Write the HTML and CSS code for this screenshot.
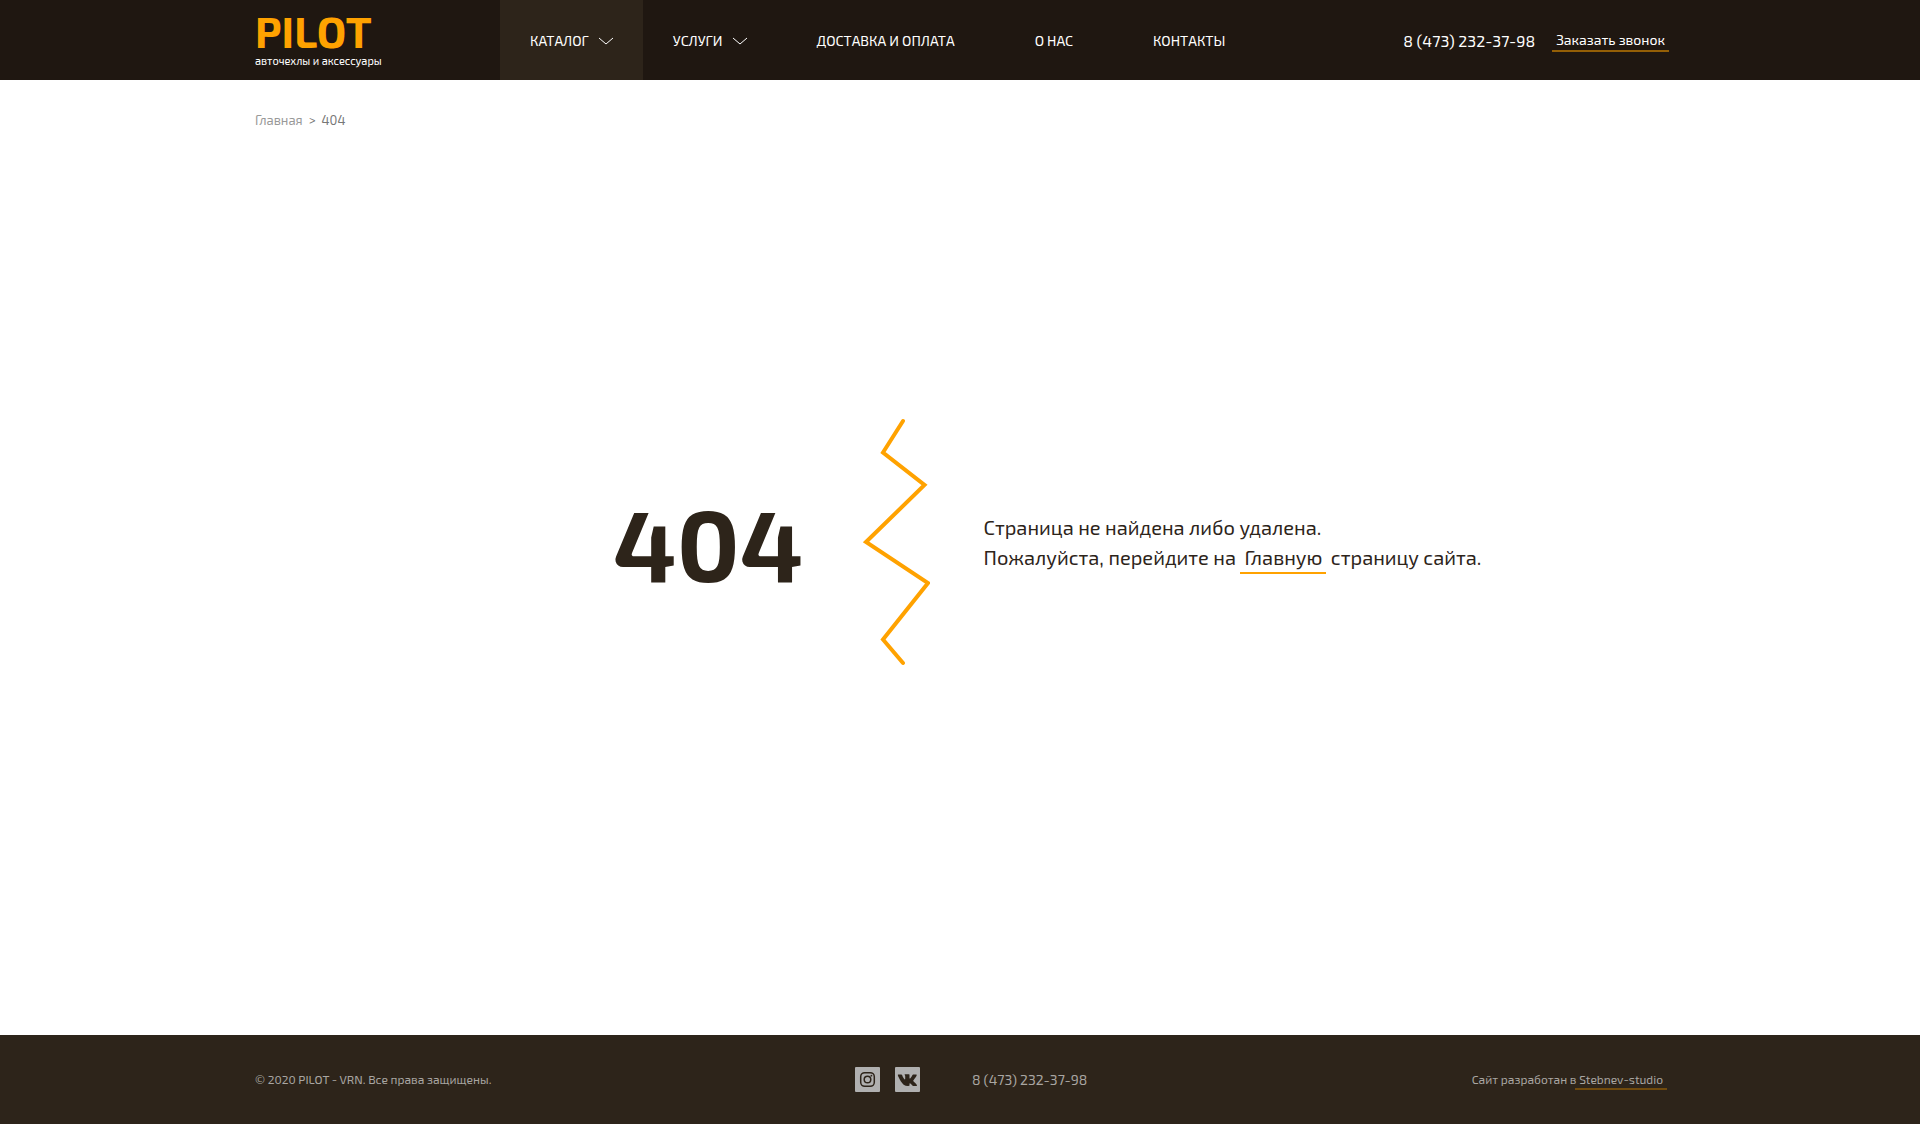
FILE: index.html
```html
<!DOCTYPE html>
<html lang="ru">
<head>
  <meta charset="utf-8">
  <meta name="viewport" content="width=device-width, initial-scale=1">
  <title>404 — PILOT</title>
  <link rel="stylesheet" href="styles.css">
</head>
<body>
  <header class="header">
    <div class="container header__inner">
      <a class="logo" href="#">
        <span class="logo__name">PILOT</span>
        <span class="logo__tagline">авточехлы и аксессуары</span>
      </a>
      <nav class="nav">
        <a class="nav__link nav__link--menu nav__link--active" href="#">КАТАЛОГ
          <svg class="nav__arrow" viewBox="0 0 16 8" aria-hidden="true"><path d="M1 1l7 6 7-6"/></svg>
        </a>
        <a class="nav__link nav__link--menu" href="#">УСЛУГИ
          <svg class="nav__arrow" viewBox="0 0 16 8" aria-hidden="true"><path d="M1 1l7 6 7-6"/></svg>
        </a>
        <a class="nav__link" href="#">ДОСТАВКА И ОПЛАТА</a>
        <a class="nav__link" href="#">О НАС</a>
        <a class="nav__link" href="#">КОНТАКТЫ</a>
      </nav>
      <div class="contacts">
        <a class="contacts__phone" href="tel:84732323798">8 (473) 232-37-98</a>
        <button class="contacts__call" type="button">Заказать звонок</button>
      </div>
    </div>
  </header>

  <main class="container main">
    <nav class="breadcrumbs">
      <a class="breadcrumbs__link" href="#">Главная</a>
      <span>&gt;</span>
      <span>404</span>
    </nav>
    <section class="error">
      <h1 class="error__code">404</h1>
      <svg class="error__crack" viewBox="0 0 68 248" aria-hidden="true"><path d="M41 3L21 34.500L62.500 67L4 124L66 165L21 221.500L41 245"/></svg>
      <p class="error__text">Страница не найдена либо удалена.<br>Пожалуйста, перейдите на <a class="error__link" href="#">Главную</a> страницу сайта.</p>
    </section>
  </main>

  <footer class="footer">
    <div class="container footer__inner">
      <p class="footer__copy">© 2020 PILOT - VRN. Все права защищены.</p>
      <div class="footer__contacts">
        <a class="social" href="#" aria-label="Instagram">
          <svg viewBox="0 0 25 25"><rect class="social__bg" width="25" height="25" rx="1"/><g class="social__line"><rect x="5.700" y="5.700" width="13.600" height="13.600" rx="4"/><circle cx="12.500" cy="12.500" r="3.300"/></g><circle class="social__fill" cx="16.400" cy="8.700" r="0.900"/></svg>
        </a>
        <a class="social" href="#" aria-label="ВКонтакте">
          <svg viewBox="0 0 25 25"><rect class="social__bg" width="25" height="25" rx="1"/><path class="social__fill" d="M3.200 7.500h3.100c.4 0 .6.200.8.600.8 2.300 2.100 4.300 2.700 4.300.3 0 .4-.2.400-.8V9.200c-.1-1.100-.6-1.200-.6-1.500 0-.2.200-.4.400-.4h4c.4 0 .5.200.5.600v3.200c0 .4.200.5.300.5.200 0 .4-.1.800-.5 1.100-1.200 1.900-3.100 1.900-3.100.1-.3.300-.5.700-.5h2.700c.8 0 .9.400.8.700-.4 1.500-3.200 5-3.300 5.100-.2.400-.3.500 0 .9.500.6 3.300 3 3.600 4.100.1.400-.1.700-.6.700h-3c-.6 0-.9-.2-1.300-.7-.8-.9-1.600-2-2.200-2-.3 0-.4.200-.4.700v1.300c0 .4-.1.600-1.100.7-3.700.2-6-2.100-7.600-4.800-1.400-2.300-2.600-4.900-2.900-5.800-.1-.5-.1-.8.300-.9z"/></svg>
        </a>
        <a class="footer__phone" href="tel:84732323798">8 (473) 232-37-98</a>
      </div>
      <p class="footer__author">Сайт разработан в <a class="footer__link" href="#">Stebnev-studio</a></p>
    </div>
  </footer>
</body>
</html>
```

FILE: styles.css
```css
* { box-sizing: border-box; }

body {
  display: flex;
  flex-direction: column;
  min-height: 100vh;
  margin: 0;
  background: #fff;
  color: #2d241a;
  font-family: "Exo 2", Roboto, "Noto Sans", sans-serif;
  font-size: 14px;
}

a { color: inherit; text-decoration: none; }
p, h1 { margin: 0; }

.container {
  width: 100%;
  max-width: 1450px;
  margin: 0 auto;
  padding: 0 20px;
}

.header { background: #1f1711; color: #fff; }
.header__inner { display: flex; height: 80px; }

.logo { flex: 0 0 245px; padding-top: 9px; }
.logo__name {
  display: block;
  color: #ffa200;
  font-size: 43px;
  font-weight: 700;
  line-height: 44px;
}
.logo__tagline { display: block; font-size: 11px; line-height: 16px; }

.nav { display: flex; }
.nav__link {
  display: flex;
  align-items: center;
  gap: 9px;
  padding: 0 40px;
  white-space: nowrap;
}
.nav__link--menu { padding: 0 29px 0 30px; }
.nav__link--active { background: #2d241a; }
.nav__arrow {
  width: 16px;
  height: 8px;
  margin-top: 2px;
  fill: none;
  stroke: #fff;
}

.contacts {
  display: flex;
  align-items: center;
  gap: 17px;
  margin-left: auto;
  white-space: nowrap;
}
.contacts__phone { font-size: 16px; }
.contacts__call {
  margin-right: -4px;
  padding: 4px 4px 2px;
  border: 0;
  border-bottom: 2px solid #945f06;
  background: none;
  color: inherit;
  font: inherit;
  line-height: 16px;
}

.main { flex: 1; display: flex; flex-direction: column; }
.breadcrumbs {
  display: flex;
  gap: 6px;
  padding-top: 32px;
  color: #777;
  font-size: 13px;
  line-height: 16px;
}
.breadcrumbs__link { color: #999; }

.error {
  flex: 1;
  display: flex;
  align-items: center;
  padding: 0 0 80px 358px;
}
.error__code {
  font-size: 100px;
  font-weight: 700;
  line-height: 120px;
}
.error__crack {
  flex: none;
  width: 68px;
  height: 248px;
  margin: 0 54px 0 58px;
  fill: none;
  stroke: #ffa200;
  stroke-width: 4;
  stroke-linecap: round;
}
.error__text { font-size: 20px; line-height: 30px; }
.error__link {
  padding: 0 4px 3px;
  border-bottom: 2px solid #ffa200;
}

.footer { background: #2d241a; color: #a9a6a2; font-size: 12px; }
.footer__inner {
  display: grid;
  grid-template-columns: 600px auto 1fr;
  align-items: center;
  min-height: 89px;
}
.footer__copy, .footer__author { padding-bottom: 2px; }
.footer__contacts { display: flex; align-items: center; gap: 15px; }
.social, .social svg { display: block; width: 25px; height: 25px; }
.social__bg { fill: #b0b0b0; }
.social__fill { fill: #2d241a; }
.social__line { fill: none; stroke: #2d241a; stroke-width: 1.5; }
.footer__phone { margin-left: 37px; font-size: 14px; }
.footer__author { text-align: right; }
.footer__link {
  margin: 0 -2px 0 -4px;
  padding: 0 4px 2px;
  border-bottom: 2px solid #704a0d;
}
```
